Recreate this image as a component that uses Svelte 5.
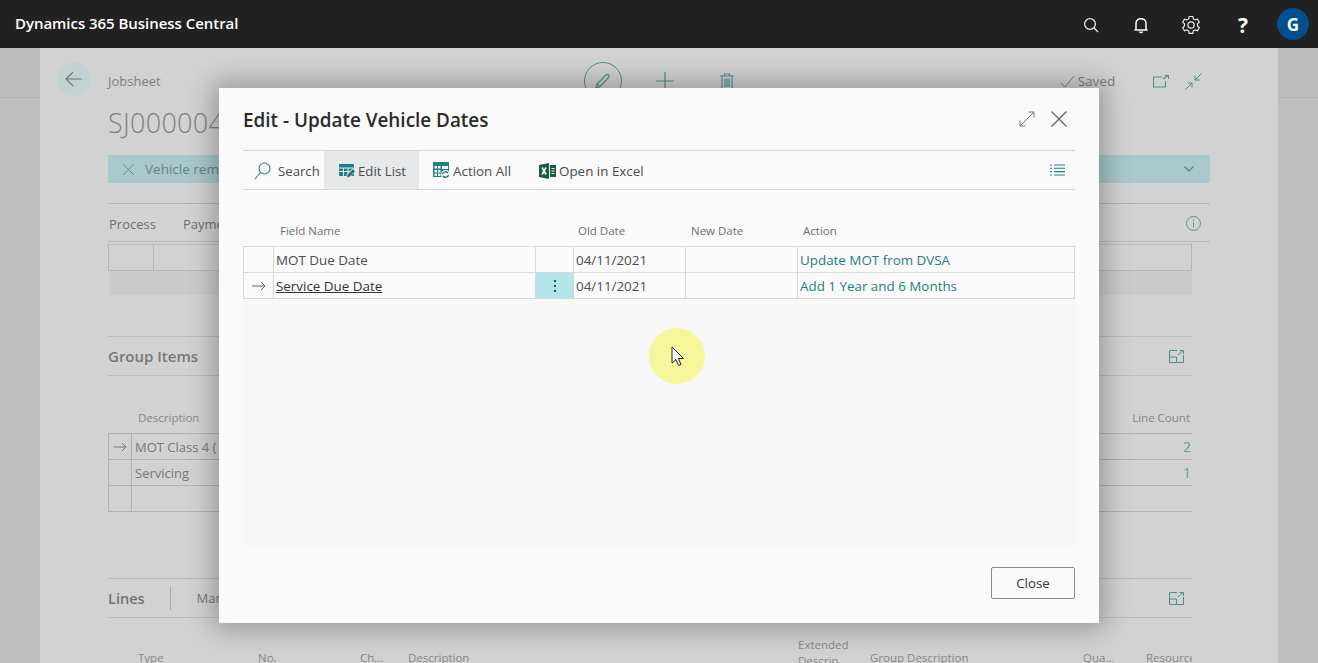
<script>
  const rows = [
    { field: 'MOT Due Date', old: '04/11/2021', action: 'Update MOT from DVSA', current: false },
    { field: 'Service Due Date', old: '04/11/2021', action: 'Add 1 Year and 6 Months', current: true }
  ];
  const groupRows = [
    { arrow: true, text: 'MOT Class 4 (', count: '2' },
    { arrow: false, text: 'Servicing', count: '1' },
    { arrow: false, text: '', count: '' }
  ];
  const lineCols = [
    { label: 'Type', w: 120 },
    { label: 'No.', w: 102 },
    { label: 'Ch...', w: 48 },
    { label: 'Description', w: 390 },
    { label: 'Extended Descrin', w: 72 },
    { label: 'Group Description', w: 213 },
    { label: 'Qua...', w: 63 },
    { label: 'Resource', w: 60 }
  ];
</script>

<div class="topbar">
  <span class="brand">Dynamics 365 Business Central</span>
  <div class="top-icons">
    <svg class="ti" viewBox="0 0 20 20" fill="none" stroke="#e8e8e8" stroke-width="1.3"><circle cx="9" cy="9" r="5.4" /><path d="M12.8 12.8 17 17" /></svg>
    <svg class="ti" viewBox="0 0 20 20" fill="none" stroke="#fff" stroke-width="1.5"><path d="M5 15V8.500c0-6.500 10-6.500 10 0V15zM3.500 15h13M8.500 16.500c.5 1.400 2.500 1.400 3 0" /></svg>
    <svg class="ti" viewBox="0 0 20 20" fill="none" stroke="#e8e8e8" stroke-width="1.2"><path d="M8.200 1.500h3.600l.5 2.400 1.800 1 2.400-.8 1.800 3.100-1.800 1.600v2.200l1.800 1.600-1.800 3.100-2.400-.8-1.800 1-.5 2.400H8.200l-.5-2.400-1.800-1-2.400.8-1.800-3.100 1.800-1.600V8.800L1.700 7.200l1.800-3.100 2.400.8 1.800-1z" /><circle cx="10" cy="10" r="3.200" /></svg>
    <span class="help">?</span>
    <span class="avatar">G</span>
  </div>
</div>

<div class="stage">
  <div class="card">
    <div class="pagehead">
      <span class="back">
        <svg width="18" height="16" viewBox="0 0 18 16" fill="none" stroke="#6f7475" stroke-width="1.1"><path d="M17 8H1M8 1 1 8l7 7" /></svg>
      </span>
      <span class="crumb">Jobsheet</span>
      <span class="edit-circle">
        <svg width="20" height="20" viewBox="0 0 20 20" fill="none" stroke="#4f8c8a" stroke-width="1.1"><path d="M3 17l1-4L13.500 3.500c1-1 3.500 1.500 2.500 2.500L6.500 16z" /><path d="M4 13l3 3" /></svg>
      </span>
      <svg class="plus" width="18" height="18" viewBox="0 0 18 18" stroke="#4f8c8a" stroke-width="1.2"><path d="M0 9h18M9 0v18" /></svg>
      <svg class="trash" width="14" height="16" viewBox="0 0 14 16" fill="none" stroke="#4f8c8a" stroke-width="1.1"><path d="M0 3h14M4.500 3V1h5v2M2 3v13h10V3M5 5.500V14M7 5.500V14M9 5.500V14" /></svg>
      <span class="saved">
        <svg width="15" height="13" viewBox="0 0 15 13" fill="none" stroke="#7c7c7c" stroke-width="1"><path d="M1 8l4 4L14 1" /></svg>
        Saved
      </span>
      <svg class="open" width="16" height="13" viewBox="0 0 16 13" fill="none" stroke="#4f8c8a" stroke-width="1.1"><path d="M9 2H.5v10h12V6M10 4l5-3.500M12 .5h3.500V4" /></svg>
      <svg class="collapse" width="17" height="17" viewBox="0 0 17 17" fill="none" stroke="#4f8c8a" stroke-width="1"><path d="M10 7l6.500-6.500M10 2.500V7h4.500M7 10 .5 16.500M2.500 10H7v4.500" /></svg>
    </div>
    <div class="sheet">
      <div class="doc-no">SJ000004</div>
      <div class="banner">
        <svg width="11" height="11" viewBox="0 0 11 11" stroke="#6c8c8f" stroke-width="1"><path d="M0 0l11 11M11 0 0 11" /></svg>
        <span class="banner-text">Vehicle reminders</span>
        <svg class="chev" width="10" height="6" viewBox="0 0 10 6" fill="none" stroke="#5e7679" stroke-width="1.1"><path d="M.5.5 5 5 9.500.5" /></svg>
      </div>
      <div class="tabs">
        <span>Process</span><span>Payments</span>
        <svg class="info" width="15" height="15" viewBox="0 0 15 15" fill="none" stroke="#5c938f"><circle cx="7.500" cy="7.500" r="7" /><path d="M7.500 6.500v5M7.500 3.500v1.500" /></svg>
      </div>
      <div class="process-row"><span class="pc a"></span><span class="pc b"></span></div>
      <div class="process-band"></div>

      <div class="section-head group">
        <span class="sec-title">Group Items</span>
        <svg class="expand" width="15" height="13" viewBox="0 0 15 13" fill="none" stroke="#4f8c8a"><path d="M8 .5H.5v12h14V5M.5 7h7v5.500M9 5l5-4.500M10.500.5h4V4" /></svg>
      </div>
      <div class="group-heads"><span>Description</span><span>Line Count</span></div>
      <div class="group-table">
        {#each groupRows as r}
          <div class="g-row">
            <span class="g-arrow">
              {#if r.arrow}<svg width="13" height="10" viewBox="0 0 13 10" fill="none" stroke="#777"><path d="M0 5h12M8 1l4 4-4 4" /></svg>{/if}
            </span>
            <span class="g-text">{r.text}</span>
            <span class="g-count">{r.count}</span>
          </div>
        {/each}
      </div>

      <div class="section-head lines">
        <span class="sec-title lines-title">Lines</span>
        <span class="sec-sep"></span>
        <span class="manage">Manage</span>
        <svg class="expand" width="15" height="13" viewBox="0 0 15 13" fill="none" stroke="#4f8c8a"><path d="M8 .5H.5v12h14V5M.5 7h7v5.500M9 5l5-4.500M10.500.5h4V4" /></svg>
      </div>
      <div class="line-heads">
        {#each lineCols as c}
          <span style={`width: ${c.w}px`}>{c.label}</span>
        {/each}
      </div>
    </div>
  </div>

  <div class="modal">
    <div class="modal-head">
      <h1>Edit - Update Vehicle Dates</h1>
      <svg class="m-expand" width="16" height="16" viewBox="0 0 16 16" fill="none" stroke="#777" stroke-width="1"><path d="M1 15 15 1M9.500 1H15v5.500M1 9.500V15h5.500" /></svg>
      <svg class="m-close" width="16" height="16" viewBox="0 0 16 16" stroke="#666" stroke-width="1.4"><path d="M.5.5l15 15M15.500.5l-15 15" /></svg>
    </div>
    <div class="toolbar">
      <button class="tool search">
        <svg width="17" height="18" viewBox="0 0 17 18" fill="none" stroke="#2f8482" stroke-width="1.100"><circle cx="10.500" cy="6.500" r="5.500" /><path d="M6.500 10.500 1 17" /></svg>
        Search
      </button>
      <button class="tool active">
        <svg width="17" height="16" viewBox="0 0 17 16"><path fill="#1f7f86" d="M0 1h15v12H0z" /><path stroke="#e6e8e9" d="M0 5h15M0 8.500h15M4.500 5v8M9 5v8" /><path fill="#e6e8e9" d="M7 15l1-4 6-6 3 3-6 6z" /><path fill="#2c6a6e" d="M8 14.500l.7-3L14 6.300l2 2-5.300 5.300z" /></svg>
        Edit List
      </button>
      <button class="tool action">
        <svg width="17" height="17" viewBox="0 0 17 17"><path fill="#1f7f86" d="M0 0h16v15H0z" /><path fill="#fafafa" d="M1.500 4h2.500v2.500H1.500zM5 4h2.500v2.500H5zM1.500 8h2.500v2.500H1.500zM5 8h2.500v2.500H5zM1.500 11.500h2.500V14H1.500zM5 11.500h2.500V14H5zM9 4h6v3H9z" /><circle cx="12.500" cy="12.500" r="4.500" fill="#fafafa" /><path fill="none" stroke="#1f6f73" stroke-width="1.300" d="M9.500 12c.5-2.500 4-3 5.500-1M15.500 13c-.5 2.500-4 3-5.500 1" /></svg>
        Action All
      </button>
      <button class="tool action">
        <svg width="17" height="16" viewBox="0 0 17 16"><path fill="#185c3c" d="M0 2l10-2v16L0 14z" /><path fill="#185c3c" d="M11 2h6v12h-6z" /><path stroke="#fafafa" d="M12.500 5.500h3M12.500 8h3M12.500 10.500h3" /><path stroke="#fafafa" stroke-width="1.700" d="M3 4.500l4 7M7 4.500l-4 7" /></svg>
        Open in Excel
      </button>
      <svg class="list-ico" width="15" height="12" viewBox="0 0 15 12" stroke="#1f7f7f" stroke-width="1.100"><path d="M0 1h2M4 1h11M0 4.300h2M4 4.300h11M0 7.600h2M4 7.600h11M0 11h2M4 11h11" /></svg>
    </div>

    <div class="grid-heads">
      <span class="h-field">Field Name</span>
      <span class="h-old">Old Date</span>
      <span class="h-new">New Date</span>
      <span>Action</span>
    </div>
    <div class="grid-wrap">
      <table>
        <colgroup>
          <col style="width: 30px" /><col style="width: 262px" /><col style="width: 38px" /><col style="width: 112px" /><col style="width: 112px" /><col />
        </colgroup>
        <tbody>
          {#each rows as r}
            <tr>
              <td class="sel">
                {#if r.current}<svg width="14" height="10" viewBox="0 0 14 10" fill="none" stroke="#666"><path d="M0 5h13M9 1l4 4-4 4" /></svg>{/if}
              </td>
              <td class:link-cell={r.current}>{r.field}</td>
              <td class="menu" class:on={r.current}>
                {#if r.current}<span class="dots"><i></i><i></i><i></i></span>{/if}
              </td>
              <td>{r.old}</td>
              <td></td>
              <td class="act">{r.action}</td>
            </tr>
          {/each}
        </tbody>
      </table>
      <div class="grid-fill"></div>
    </div>
    <div class="modal-foot">
      <button class="close">Close</button>
    </div>
  </div>

  <div class="pointer">
    <svg width="14" height="21" viewBox="0 0 14 21"><path d="M1 1v16l4-3.500 2.500 6 2.500-1-2.500-6h5z" fill="#fff" stroke="#222" stroke-width="1" /></svg>
  </div>
</div>

<style>
  :global(body) {
    margin: 0;
    font-family: "Open Sans", "Noto Sans", sans-serif;
    overflow: hidden;
  }
  svg {
    flex: none;
    display: block;
  }
  .topbar {
    height: 48px;
    background: #212121;
    display: flex;
    align-items: center;
    padding: 0 9px 0 15px;
    color: #fff;
  }
  .brand {
    font-size: 15px;
    font-weight: 600;
    letter-spacing: -0.04px;
    margin-top: -3px;
  }
  .top-icons {
    margin-left: auto;
    display: flex;
    align-items: center;
  }
  .ti {
    width: 20px;
    height: 20px;
    margin: 2px 30px 0 0;
  }
  .help {
    font-size: 21px;
    font-weight: 700;
    width: 14px;
    margin: 2px 27px 0 7px;
  }
  .avatar {
    width: 32px;
    height: 32px;
    border-radius: 50%;
    background: #00508f;
    display: flex;
    align-items: center;
    justify-content: center;
    font-weight: 700;
    font-size: 17px;
    margin-left: -2px;
  }

  .stage {
    position: relative;
    height: 615px;
    overflow: hidden;
    background: linear-gradient(#bcbcbc 0 49px, #b2b2b2 49px 50px, #bdbdbd 50px);
    padding: 0 40px;
  }
  .card {
    height: 615px;
    background: #d2d2d2;
    color: #777;
  }
  .pagehead {
    display: flex;
    align-items: center;
    box-sizing: border-box;
    height: 62px;
    padding: 4px 0 0 17px;
  }
  .back {
    width: 34px;
    height: 34px;
    border-radius: 50%;
    background: #c3d3d3;
    display: flex;
    align-items: center;
    justify-content: center;
    margin-top: -4px;
  }
  .crumb {
    font-size: 13px;
    margin-left: 17px;
    color: #808080;
  }
  .edit-circle {
    width: 38px;
    height: 38px;
    box-sizing: border-box;
    border: 1px solid #4f8c8a;
    border-radius: 50%;
    display: flex;
    align-items: center;
    justify-content: center;
    margin-left: 423px;
  }
  .plus {
    margin-left: 34px;
  }
  .trash {
    margin-left: 46px;
  }
  .saved {
    display: flex;
    align-items: center;
    gap: 3px;
    font-size: 13.500px;
    margin-left: 326px;
    color: #7c7c7c;
  }
  .open {
    margin-left: 38px;
  }
  .collapse {
    margin-left: 16px;
  }
  .sheet {
    padding: 0 86px 0 68px;
  }
  .doc-no {
    font-size: 27px;
    font-weight: 300;
    color: #808080;
    height: 52px;
    line-height: 40px;
    margin-top: -7px;
    letter-spacing: 0.3px;
  }
  .banner {
    margin-right: -18px;
    height: 28px;
    background: #a8c8cb;
    display: flex;
    align-items: center;
    padding: 0 16px 0 15px;
    gap: 11px;
    font-size: 13.500px;
    color: #6c7f82;
    border-radius: 1px;
  }
  .chev {
    margin-left: auto;
  }
  .tabs {
    margin: 20px -18px 0 0;
    height: 39px;
    box-sizing: border-box;
    border-top: 1px solid #b5b5b5;
    border-bottom: 1px solid #b9b9b9;
    display: flex;
    align-items: center;
    gap: 27px;
    font-size: 13px;
    color: #6f6f6f;
    padding: 2px 0 0 1px;
  }
  .info {
    margin: -1px 9px 0 auto;
  }
  .process-row {
    display: flex;
    height: 27px;
    margin-top: 2px;
    box-sizing: border-box;
    border: 1px solid #b5b5b5;
    border-top-color: #bcbcbc;
  }
  .pc.a {
    width: 44px;
    border-right: 1px solid #b5b5b5;
  }
  .process-band {
    height: 24px;
    margin-left: 2px;
    background: #cbcbcb;
  }
  .section-head {
    display: flex;
    align-items: center;
    height: 40px;
    box-sizing: border-box;
    border-top: 1px solid #bdb9b7;
    border-bottom: 1px solid #bdb9b7;
    padding-right: 8px;
  }
  .section-head.group {
    margin-top: 41px;
  }
  .section-head.lines {
    margin-top: 66px;
  }
  .sec-title {
    font-size: 15px;
    font-weight: 600;
    color: #777;
  }
  .lines-title {
    font-size: 14.500px;
    color: #727272;
  }
  .sec-sep {
    width: 1px;
    height: 23px;
    background: #a9a9a9;
    margin: 0 26px 0 25px;
  }
  .manage {
    font-size: 13px;
    color: #777;
  }
  .expand {
    margin-left: auto;
  }
  .group-heads {
    display: flex;
    justify-content: space-between;
    height: 57px;
    box-sizing: border-box;
    padding: 34px 2px 0 30px;
    font-size: 11.500px;
    color: #868686;
  }
  .group-table {
    border-top: 1px solid #b5b0af;
  }
  .g-row {
    display: flex;
    height: 26px;
    box-sizing: border-box;
    border-bottom: 1px solid #b5b0af;
    font-size: 13px;
    align-items: center;
    color: #777;
  }
  .g-arrow {
    width: 24px;
    height: 25px;
    box-sizing: border-box;
    border-left: 1px solid #b5b0af;
    border-right: 1px solid #b5b0af;
    display: flex;
    align-items: center;
    justify-content: center;
  }
  .g-text {
    margin-left: 3px;
  }
  .g-count {
    margin-left: auto;
    margin-right: 1px;
    color: #6b9a97;
    font-size: 14px;
  }
  .line-heads {
    display: flex;
    align-items: flex-end;
    padding: 0 0 0 30px;
    font-size: 11.500px;
    color: #858585;
    overflow: hidden;
    line-height: 16px;
    height: 52px;
    box-sizing: border-box;
  }
  .line-heads span {
    flex: none;
    margin-bottom: 4px;
  }
  .line-heads span:nth-child(5) {
    margin-bottom: 1px;
  }

  .modal {
    position: absolute;
    left: 219px;
    top: 40px;
    width: 880px;
    height: 535px;
    box-sizing: border-box;
    padding: 0 24px;
    background: #fafafa;
    box-shadow: 0 0 24px 6px rgba(0, 0, 0, 0.28);
    display: flex;
    flex-direction: column;
  }
  .modal-head {
    height: 62px;
    flex: none;
    display: flex;
    align-items: center;
    gap: 16px;
  }
  h1 {
    font-size: 18.900px;
    font-weight: 600;
    color: #2a2a2a;
    margin: 2px auto 0 0;
  }
  .m-expand {
    margin-top: -1px;
  }
  .m-close {
    margin: -1px 8px 0 0;
  }
  .toolbar {
    flex: none;
    height: 40px;
    box-sizing: border-box;
    border-top: 1px solid #d4d4d4;
    border-bottom: 1px solid #d4d4d4;
    display: flex;
    align-items: stretch;
    color: #4a4a4a;
  }
  .tool {
    border: 0;
    background: none;
    font: inherit;
    font-size: 13.200px;
    color: #4a4a4a;
    display: flex;
    align-items: center;
    gap: 3px;
    padding: 1px 13px 0 14px;
  }
  .tool.action {
    font-size: 13.400px;
    padding-right: 14px;
  }
  .tool.search {
    width: 81px;
    padding: 1px 0 0 11px;
    gap: 7px;
  }
  .tool.active {
    background: #e6e8e9;
    width: 95px;
    padding: 1px 0 0 15px;
    gap: 2px;
  }
  .list-ico {
    margin: auto 10px auto auto;
  }
  .grid-heads {
    flex: none;
    height: 56px;
    box-sizing: border-box;
    padding: 33px 0 0 37px;
    display: flex;
    font-size: 11.500px;
    color: #6f6f6f;
  }
  .h-field { width: 298px; }
  .h-old { width: 113px; }
  .h-new { width: 112px; }
  .grid-wrap {
    flex: none;
    height: 300px;
    display: flex;
    flex-direction: column;
  }
  table {
    border-collapse: collapse;
    table-layout: fixed;
    width: 832px;
    font-size: 13.400px;
    color: #4d4d4d;
  }
  td {
    height: 26px;
    border: 1px solid #d6d8da;
    padding: 1px 2px 0;
    box-sizing: border-box;
    white-space: nowrap;
  }
  .sel svg {
    margin-left: 6px;
  }
  .link-cell {
    text-decoration: underline;
    color: #333;
  }
  .menu.on {
    background: #b2e6ea;
  }
  .dots {
    display: flex;
    flex-direction: column;
    align-items: center;
    gap: 3px;
  }
  .dots i {
    width: 2px;
    height: 2px;
    background: #1f4f55;
  }
  .act {
    color: #1d7f7c;
  }
  .grid-fill {
    flex: 1;
    background: #f7f7f7;
  }
  .modal-foot {
    flex: 1;
    display: flex;
    justify-content: flex-end;
    align-items: flex-start;
    padding-top: 21px;
  }
  .close {
    width: 84px;
    height: 32px;
    background: #fafafa;
    border: 1px solid #8a8a8a;
    border-radius: 2px;
    font: inherit;
    font-size: 13.300px;
    color: #333;
  }

  .pointer {
    position: absolute;
    left: 649px;
    top: 280px;
    width: 56px;
    height: 56px;
    border-radius: 50%;
    background: #f6f69b;
  }
  .pointer svg {
    position: absolute;
    left: 22px;
    top: 18px;
  }
</style>
